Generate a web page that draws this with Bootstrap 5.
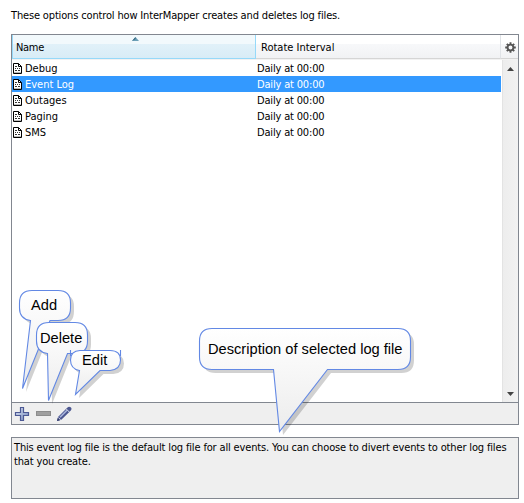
<!DOCTYPE html>
<html lang="en">
<head>
<meta charset="utf-8">
<meta name="viewport" content="width=device-width, initial-scale=1">
<title>Log Files</title>
<link rel="stylesheet" href="https://cdn.jsdelivr.net/npm/bootstrap@5.3.0/dist/css/bootstrap.min.css">
<style>
body{width:524px;height:503px;overflow:hidden;background:#fff;color:#000;font:11px/16px "DejaVu Sans Condensed","DejaVu Sans",sans-serif;font-stretch:condensed;white-space:nowrap}
.page-wrap{padding:8px 5px 0 11px}
.intro{height:26px;letter-spacing:-.155px}
.log-panel{height:391px;border:1px solid #828790}
.head-row{height:25px;border-bottom:1px solid #f2f2f2}
.head-cell{height:24px;padding:5px 0 0 5px;border-right:1px solid #e0e3e7;border-bottom:1px solid #d5d5d5;background:linear-gradient(#fff 0 9px,#f7f8fa 9px,#f1f2f4)}
.head-cell.sorted{width:244px;padding-left:3px;letter-spacing:-.3px;border:1px solid #96d9f9;border-top:0;background:linear-gradient(#f2f9fc 0 9px,#e1f1f9 9px,#d8ecf6)}
.head-cell.sorted svg{left:119px;top:2px}
.head-gear{width:17px;padding:7px 0 0 4px}
.list-area{height:342px}
.log-row{height:16px;line-height:17px}
.log-row > span{letter-spacing:-.17px}
.log-row.picked{background:#39f;color:#fff}
.name-cell{width:245px;padding-left:1px;gap:3px}
.rows-box{margin-right:1px}
.scroll-track{width:16px;border-left:1px solid #e3e3e3;background:linear-gradient(90deg,#ededed,#f2f2f2);padding:7px 0 6px 4px}
.tool-strip{height:22px;border-top:1px solid #828790;background:#efefef;padding:3px 0 0 2px;gap:5px}
.desc-box{height:62px;margin-top:12px;border:1px solid #828790;background:#efefef;padding:3px 2px;line-height:14px;letter-spacing:-.15px}
.callouts{left:0;top:0;pointer-events:none}
.callouts text{font-family:"Liberation Sans",Arial,sans-serif;fill:#000}
</style>
</head>
<body>
<svg width="0" height="0" class="position-absolute">
  <symbol id="doc" viewBox="0 0 9 11"><path d="M.5.5h5l3 3v7h-8z" fill="#fff" stroke="#000"/><path d="M5.5.5v3h3" fill="none" stroke="#000"/><path d="M2 3.500h2M2 5.500h1m1 0h1m1 0h1M2 7.500h2m1 0h2" stroke="#333"/><path d="M1 9.500h7" stroke="#bbb"/></symbol>
</svg>
<main class="page-wrap">
  <div class="intro">These options control how InterMapper creates and deletes log files.</div>
  <section class="log-panel d-flex flex-column">
    <div class="head-row d-flex">
      <div class="head-cell sorted position-relative">Name<svg class="position-absolute" width="7" height="4"><path d="M0 4 3.500 0 7 4z" fill="#6ba0b8"/><path d="M0 4 3.500 0V2z" fill="#2f5f78"/></svg></div>
      <div class="head-cell flex-grow-1">Rotate Interval</div>
      <div class="head-cell head-gear border-end-0"><svg class="d-block" width="11" height="11" viewBox="-5.5 -5.5 11 11"><circle r="2.9" fill="none" stroke="#555" stroke-width="1.9"/><path d="M0-5.300v2M0 5.300v-2M-5.300 0h2M5.300 0h-2M-3.700-3.700l1.300 1.300M3.700 3.700 2.400 2.400M-3.700 3.700l1.300-1.300M3.700-3.700 2.400-2.400" stroke="#555" stroke-width="1.9"/></svg></div>
    </div>
    <div class="list-area d-flex">
      <div class="rows-box flex-grow-1">
        <div class="log-row d-flex"><div class="name-cell d-flex align-items-center"><svg width="9" height="11"><use href="#doc"/></svg><span>Debug</span></div><span>Daily at 00:00</span></div>
        <div class="log-row picked d-flex"><div class="name-cell d-flex align-items-center"><svg width="9" height="11"><use href="#doc"/></svg><span>Event Log</span></div><span>Daily at 00:00</span></div>
        <div class="log-row d-flex"><div class="name-cell d-flex align-items-center"><svg width="9" height="11"><use href="#doc"/></svg><span>Outages</span></div><span>Daily at 00:00</span></div>
        <div class="log-row d-flex"><div class="name-cell d-flex align-items-center"><svg width="9" height="11"><use href="#doc"/></svg><span>Paging</span></div><span>Daily at 00:00</span></div>
        <div class="log-row d-flex"><div class="name-cell d-flex align-items-center"><svg width="9" height="11"><use href="#doc"/></svg><span>SMS</span></div><span>Daily at 00:00</span></div>
      </div>
      <div class="scroll-track d-flex flex-column justify-content-between">
        <svg width="7" height="4"><path d="M0 4 3.500 0 7 4z" fill="#444"/></svg>
        <svg width="7" height="4"><path d="M0 0h7L3.500 4z" fill="#444"/></svg>
      </div>
    </div>
    <div class="tool-strip d-flex">
      <svg width="16" height="16"><defs><linearGradient id="pl" x2="1" y2="1"><stop stop-color="#dfe7f6"/><stop offset="1" stop-color="#7085b8"/></linearGradient></defs><path d="M6.500 1.500h3v5h5v3h-5v5h-3v-5h-5v-3h5z" fill="url(#pl)" stroke="#4d5994" stroke-width="1.2"/></svg>
      <svg width="16" height="16"><path d="M1 5h15v5H1z" fill="#8d8d8d"/><path d="M2 6h13v3H2z" fill="#a0a0a0"/></svg>
      <svg width="16" height="16"><path d="M1 15 2 11 11.200 1.700Q13-.2 14.700 1.300T14.600 4.700L5.300 13.800z" fill="#4c5790"/><path d="m4 11.200 7-7" stroke="#a9b5dc" stroke-width="1.6"/><path d="m10.300 3 3 3" stroke="#dfe4f3"/><path d="m1 15 .8-3 2.200 2.200z" fill="#333d6c"/><path d="m2.400 11.600 2.300 2.200" stroke="#d5d7e8"/></svg>
    </div>
  </section>
  <section class="desc-box"><div>This event log file is the default log file for all events. You can choose to divert events to other log files</div><div>that you create.</div></section>
</main>
<svg class="callouts position-absolute" width="524" height="503">
  <defs>
    <linearGradient id="fillg" x2="0" y2="1"><stop stop-color="#fff"/><stop offset="1" stop-color="#ececec"/></linearGradient>
    <path id="c1" d="M32 290.500H58Q70.500 290.500 70.500 303V308Q70.500 320.500 58 320.500H50L22.500 388.500 30.500 320.500Q19.500 319 19.500 308V303Q19.500 290.500 32 290.500z"/>
    <path id="c2" d="M49 322.500H75Q87.500 322.500 87.500 335V341Q87.500 353.500 75 353.500H67.500L48.500 400.500 47.500 353.500Q36.500 352 36.500 341V335Q36.500 322.500 49 322.500z"/>
    <path id="c3" d="M80 350.500H110Q120.500 350.500 120.500 360T110 370.500H100L75.500 394.500 79.500 370.500Q70.500 369 70.500 360T80 350.500z"/>
    <path id="c4" d="M212 328.500H398Q410.500 328.500 410.500 341V357Q410.500 369.500 398 369.500H327.500L279.500 431.500 273.500 369.500H212Q199.500 369.500 199.500 357V341Q199.500 328.500 212 328.500z"/>
  </defs>
  <g stroke="#6288e4" stroke-width="1.1">
    <use href="#c1" x="3.500" y="3.500" fill="#000" fill-opacity=".18" stroke="none"/><use href="#c1" fill="url(#fillg)"/>
    <use href="#c2" x="3.500" y="3.500" fill="#000" fill-opacity=".18" stroke="none"/><use href="#c2" fill="url(#fillg)"/>
    <use href="#c3" x="3.500" y="3.500" fill="#000" fill-opacity=".18" stroke="none"/><use href="#c3" fill="url(#fillg)"/><path d="M70.500 350v6M120.500 350v6"/>
    <use href="#c4" x="3.500" y="3.500" fill="#000" fill-opacity=".18" stroke="none"/><use href="#c4" fill="url(#fillg)"/>
  </g>
  <g font-size="14.650">
    <text x="31" y="310">Add</text>
    <text x="40" y="343">Delete</text>
    <text x="82" y="365">Edit</text>
    <text x="208" y="354">Description of selected log file</text>
  </g>
</svg>
<script src="https://cdn.jsdelivr.net/npm/bootstrap@5.3.0/dist/js/bootstrap.bundle.min.js"></script>
</body>
</html>
